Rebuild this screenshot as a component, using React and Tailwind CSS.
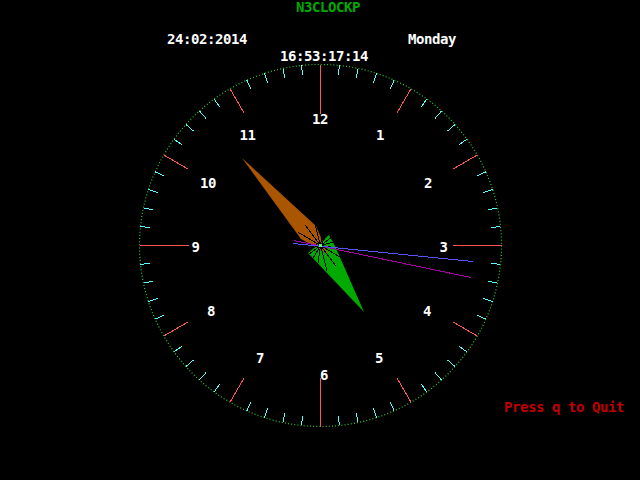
import React from "react";

const CX = 320.5;
const CY = 245.5;
const R = 181;

function pt(angleDeg, r) {
  const a = (angleDeg * Math.PI) / 180;
  return [CX + r * Math.sin(a), CY - r * Math.cos(a)];
}

const numbers = [
  ["12", 320, 124],
  ["1", 380, 140],
  ["2", 428, 188],
  ["3", 443.5, 252],
  ["4", 427, 316],
  ["5", 379, 363],
  ["6", 324, 380],
  ["7", 260, 363],
  ["8", 211, 316],
  ["9", 195.5, 252],
  ["10", 208, 188],
  ["11", 247.5, 140],
];

const fontCls = "font-['DejaVu_Sans_Mono','Liberation_Mono',monospace] font-bold text-[14px] tracking-[-0.43px]";

export default function App() {
  const ticks = [];
  for (let m = 0; m < 60; m++) {
    const ang = m * 6;
    let r1, color;
    if (m % 15 === 0) {
      r1 = 132;
      color = "#ff5555";
    } else if (m % 5 === 0) {
      r1 = 153;
      color = "#ff5555";
    } else {
      r1 = 171;
      color = "#55ffff";
    }
    const [x1, y1] = pt(ang, R);
    const [x2, y2] = pt(ang, r1);
    ticks.push(
      <line key={m} x1={x1} y1={y1} x2={x2} y2={y2} stroke={color} strokeWidth={1} shapeRendering="crispEdges" />
    );
  }

  const spokes = [];
  for (let i = 0; i < 16; i++) {
    const [x, y] = pt(i * 22.5 + 8, 26);
    spokes.push(<line key={i} x1={CX} y1={CY} x2={x} y2={y} stroke="#000" strokeWidth={1} shapeRendering="crispEdges" />);
  }

  return (
    <div className="w-[640px] h-[480px] bg-black overflow-hidden">
      <svg width="640" height="480" viewBox="0 0 640 480" className="block">
        <circle cx={CX} cy={CY} r={R} fill="none" stroke="#33cc33" strokeWidth={1.2} strokeDasharray="1 2.159" />
        {ticks}

        <polygon points="364,312 335,246 329,235 308,253" fill="#00aa00" />
        <polygon points="242,158 316,226 328,254 301,239" fill="#aa5500" />
        {spokes}
        <line x1={294} y1={240.5} x2={471} y2={277.5} stroke="#aa00aa" strokeWidth={1} shapeRendering="crispEdges" />
        <line x1={293} y1={243.5} x2={473} y2={261.5} stroke="#5555ff" strokeWidth={1} shapeRendering="crispEdges" />
        <rect x={319} y={244} width={3} height={3} fill="#55ff55" />

        <g className={`${fontCls} fill-white`}>
          {numbers.map(([t, x, y]) => (
            <text key={t} x={x} y={y} textAnchor="middle">
              {t}
            </text>
          ))}
          <text x={167} y={44}>24:02:2014</text>
          <text x={408} y={44}>Monday</text>
          <text x={280} y={61}>16:53:17:14</text>
        </g>
        <text x={296} y={12} className={`${fontCls} fill-[#00aa00]`}>
          N3CLOCKP
        </text>
        <text x={504} y={412} className={`${fontCls} fill-[#c00000]`}>
          Press q to Quit
        </text>
      </svg>
    </div>
  );
}
